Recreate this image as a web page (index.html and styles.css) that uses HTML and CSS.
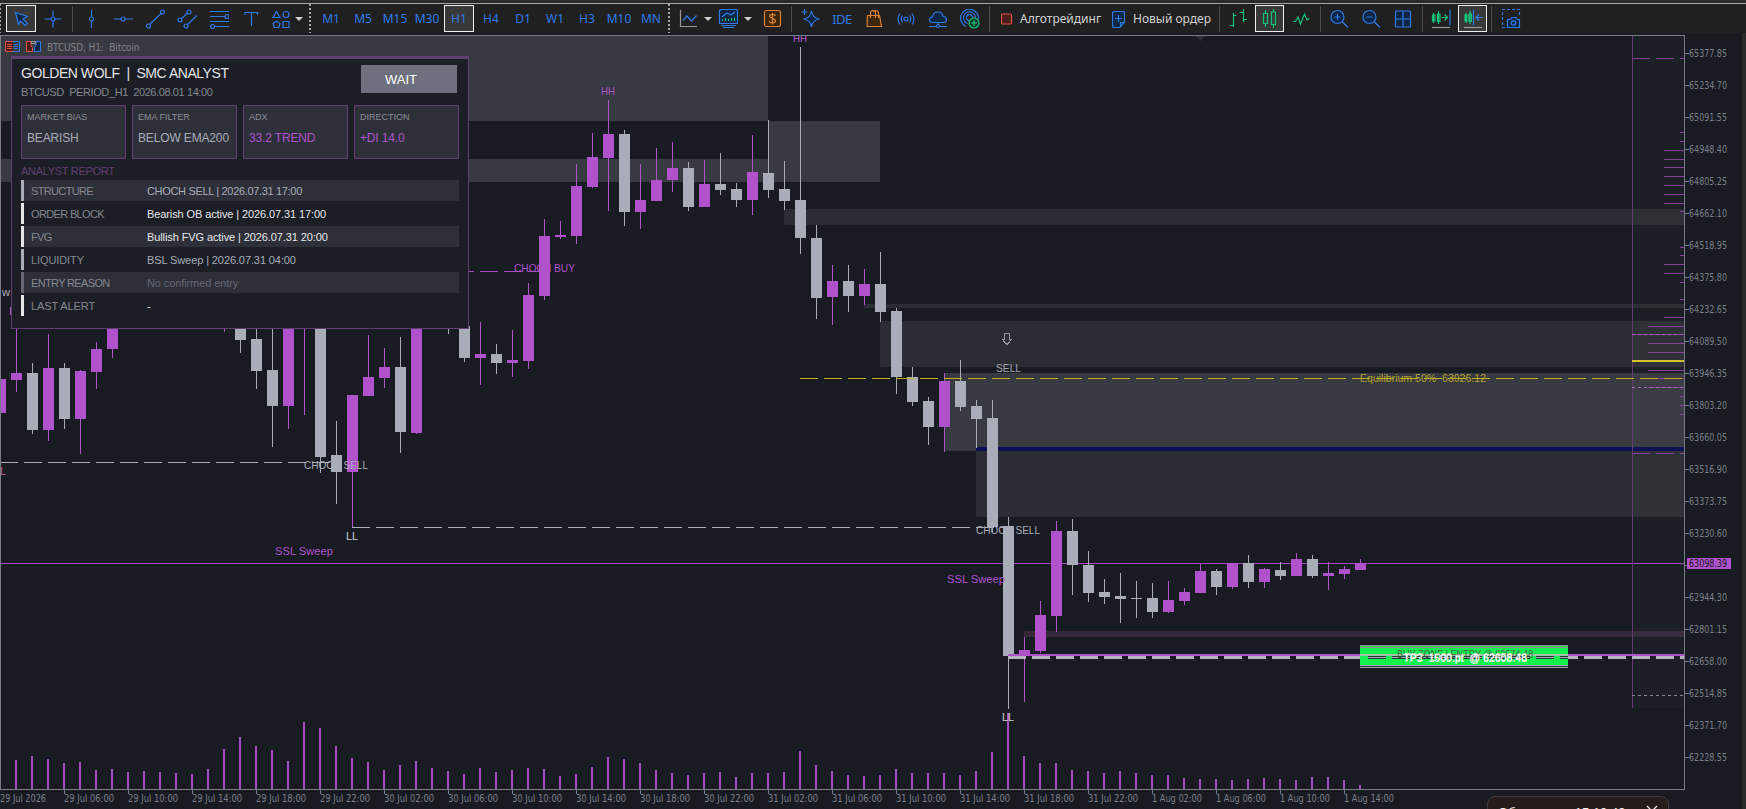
FILE: index.html
```
<!DOCTYPE html>
<html lang="ru">
<head>
  <meta charset="UTF-8">
  <meta name="viewport" content="width=device-width, initial-scale=1.0">
  <title>BTCUSD, H1</title>
  <link rel="stylesheet" href="styles.css">
</head>
<body>
  <header class="toolbar">
    <span class="grip first"></span>
    <button class="tool active"><svg width="20" height="20"><path class="fill" d="M4.500 3.500 L16.500 7.500 L12 10 L16.500 14.500 L14 16.500 L9.500 12 L7.500 15.500 Z"/></svg></button>
    <button class="tool"><svg width="20" height="20"><path d="M10 1.500V7.500M10 12.500V18.500M1.500 10H7.500M12.500 10H18.500"/><circle cx="10" cy="10" r="2"/></svg></button>
    <span class="sep"></span>
    <button class="tool"><svg width="20" height="20"><path d="M10.500 1V8M10.500 12V19"/><circle cx="10.500" cy="10" r="2"/></svg></button>
    <button class="tool"><svg width="20" height="20"><path d="M1 10H8M12 10H20"/><circle cx="10" cy="10" r="2"/></svg></button>
    <button class="tool"><svg width="20" height="20"><path d="M4.500 15.500L16 4.500"/><circle cx="3.500" cy="17" r="2"/><circle cx="17.500" cy="3" r="2"/></svg></button>
    <button class="tool"><svg width="20" height="20"><path d="M4.500 9.500L10.500 4M10.500 15.500L20 6.500"/><circle cx="3" cy="11" r="2"/><circle cx="12" cy="3" r="2"/><circle cx="9" cy="17" r="2"/></svg></button>
    <button class="tool"><svg width="20" height="20"><path d="M1 2.500H20M1 7.500H16M5 17.500H20M1 12.500H20"/><circle cx="18" cy="7.500" r="2"/><circle cx="3.500" cy="17.500" r="2"/></svg></button>
    <button class="tool"><svg width="20" height="20"><path d="M4 6V3.500H16.500V6M10.500 3.500V17"/></svg></button>
    <button class="tool shapes"><svg width="20" height="20"><path d="M5.500 2.500L9 8.500H2Z"/><circle cx="15" cy="5.500" r="3"/><path d="M5.500 12.200L9 14.500L7.700 18.500H3.300L2 14.500Z"/><path d="M12 12.500H18V18.500H12Z"/></svg></button>
    <span class="caret"></span>
    <span class="grip"></span>
    <button class="tool">M1</button>
    <button class="tool">M5</button>
    <button class="tool">M15</button>
    <button class="tool">M30</button>
    <button class="tool active">H1</button>
    <button class="tool">H4</button>
    <button class="tool">D1</button>
    <button class="tool">W1</button>
    <button class="tool">H3</button>
    <button class="tool">M10</button>
    <button class="tool">MN</button>
    <span class="grip last"></span>
    <button class="tool"><svg width="20" height="20"><path class="gray" d="M2.500 1V17.500H19"/><path d="M5 11.500L9 7L13.500 12L18.500 6.500"/></svg></button>
    <span class="caret"></span>
    <button class="tool"><svg width="20" height="20"><path class="fill" d="M1.500 14.500V2.500Q1.500 0.500 3.500 0.500H17.500Q19.500 0.500 19.500 2.500V14.500Z"/><path d="M3 16.500H18M5 18.500H16M4 8L9 4L13 6L17 3"/><path class="green" d="M4.500 12V10.500M7.500 12V9M10.500 12V10M13.500 12V9M16.500 12V8.500"/></svg></button>
    <span class="caret"></span>
    <button class="tool dollar"><svg width="20" height="20"><rect class="orange" x="2.500" y="1.500" width="16" height="16" rx="2"/><path class="orange-line" d="M13.500 7C13 5 7.500 4.500 7.500 7C7.500 9.800 13.500 9 13.500 12C13.500 14.500 8 14.500 7 12M10.500 4V15.500"/></svg></button>
    <span class="sep"></span>
    <button class="tool"><svg width="20" height="20"><path class="fill" d="M11.500 2Q12.500 9 19.500 10Q12.500 11 11.500 18Q10.500 11 3.500 10Q10.500 9 11.500 2Z"/><path d="M4.500 0V6M1.500 3H7.500"/></svg></button>
    <button class="tool ide">IDE</button>
    <button class="tool"><svg width="20" height="20"><path class="orange" d="M3.500 6.500H15.500L17.500 17.500H3Z"/><path class="orange-line" d="M6.500 9V4Q6.500 1.500 9 1.500Q11.500 1.500 11.500 4V9M9 3Q10 1.500 12 1.500Q14.500 2 14.500 4V9"/></svg></button>
    <button class="tool"><svg width="20" height="20"><circle cx="10" cy="10" r="2"/><path d="M6.500 6.500Q4 10 6.500 13.500M4 4.500Q0 10 4 15.500M13.500 6.500Q16 10 13.500 13.500M16 4.500Q20 10 16 15.500"/></svg></button>
    <button class="tool"><svg width="20" height="20"><path class="fill" d="M5 13.500Q1.500 13.500 1.500 10.500Q2 8 4.500 8Q5 3 10 3Q14.500 3 15 7.500Q18.500 7.500 18.500 11Q18.500 13.500 15.500 13.500Z"/><path d="M1 17.500H8M12 17.500H19M10 13.500V16"/><circle cx="10" cy="17" r="1.500"/></svg></button>
    <button class="tool"><svg width="20" height="20"><path d="M6 17.500A9 9 0 1 1 18.500 10M7.500 14.500A6 6 0 1 1 15.500 9M9 11.500A3 3 0 1 1 12.500 9"/><circle class="green-fill" cx="14" cy="14" r="5"/><path class="green" d="M14 11V17M11 14H17"/></svg></button>
    <span class="sep"></span>
    <button class="wide algo"><svg width="12" height="12"><rect class="red" x="0.500" y="1" width="10" height="10" rx="1"/></svg>Алготрейдинг</button>
    <button class="wide order"><svg width="14" height="18"><path class="fill" d="M2.500 1.500H11.500Q12.500 1.500 12.500 3V12L8 17.500H2.500Q0.500 17.500 0.500 16V3Q0.500 1.500 2.500 1.500Z"/><path d="M12.500 12.500H8.500V17M6.500 5V12M3 8.500H10"/></svg>Новый ордер</button>
    <span class="sep"></span>
    <button class="tool"><svg width="20" height="20"><path class="green" d="M5.500 4V18M1.500 16.500H5.500M5.500 6.500H8.500M15.500 0V13M11.500 3.500H15.500M15.500 10.500H19"/></svg></button>
    <button class="tool active slim"><svg width="20" height="20"><path class="green" d="M5.500 1V4M5.500 15V18M13.500 0V3M13.500 16V19"/><path class="green" d="M3.500 4.500H7.500V14.500H3.500ZM11.500 3H15.500V15.500H11.500Z"/></svg></button>
    <button class="tool"><svg width="20" height="20"><path class="green" d="M2 12.500H4.500L7 8L9.500 15L13.500 5L16 11L18.500 9.500"/></svg></button>
    <span class="sep"></span>
    <button class="tool"><svg width="20" height="20"><circle class="fill" cx="8.500" cy="8" r="6.500"/><path d="M13.500 13L19 18.500M5.500 8H11.500M8.500 5V11"/></svg></button>
    <button class="tool"><svg width="20" height="20"><circle class="fill" cx="8.500" cy="8" r="6.500"/><path d="M13.500 13L19 18.500M5.500 8H11.500"/></svg></button>
    <button class="tool"><svg width="20" height="20"><rect class="fill" x="2.500" y="2" width="15" height="16" rx="1"/><path d="M10 2V18M2.500 10H17.500"/></svg></button>
    <span class="sep"></span>
    <button class="tool"><svg width="20" height="20"><path class="green" d="M2.500 4V14M7.500 2V15M1.500 6H4V12H1.500ZM6.500 5H9V12.500H6.500ZM10.500 8.500H16M13.500 5.500L16.500 8.500L13.500 11.500"/><path d="M19 1V16"/><path class="gray" d="M1 18.500H19"/></svg></button>
    <button class="tool active slim"><svg width="20" height="20"><path class="green" d="M3 4V14M7 2V15M2 6H4V12H2ZM6 5H8.500V12.500H6Z"/><path d="M10.500 1V16M13 8.500H20M16 5.500L13 8.500L16 11.500"/><path class="gray" d="M1 18.500H19"/></svg></button>
    <span class="sep wider"></span>
    <button class="tool"><svg width="20" height="20"><path class="dash" d="M4 18.500H1.500V0.500H18.500V7"/><path class="fill" d="M7.500 10.500H9.500L11 8.500H15L16.500 10.500H18.500V18.500H6.500V10.500Z"/><circle cx="12.500" cy="14" r="2.200"/></svg></button>
  </header>

  <main class="workspace">
    <svg class="chart" id="chart" viewBox="0 33 1746 776" width="1746" height="776"></svg>

    <div class="chart-title">
      <svg width="16" height="12"><path class="red" d="M8 0.500H0.500V10.500H8M2 3.500H7M2 5.500H7M2 7.500H7"/><path d="M8 0.500H14.500V10.500H8M8.500 3.500H13M8.500 5.500H13M8.500 7.500H13"/></svg>
      <svg width="16" height="12"><path class="red" d="M5 0.500H0.500V10.500H6.500V6.500L5 5Z"/><path class="fill" d="M10 0.500H14.500V10.500H8.500V6.500L10 5Z"/><path class="gray" d="M5.500 0.500H9.500V2.500H5.500Z"/></svg>
      <span>BTCUSD, H1:&nbsp; Bitcoin</span>
    </div>

    <section class="panel">
      <div class="panel-head">
        <div>
          <h1>GOLDEN WOLF&nbsp; |&nbsp; SMC ANALYST</h1>
          <p class="sub">BTCUSD&nbsp; PERIOD_H1&nbsp; 2026.08.01 14:00</p>
        </div>
        <div class="signal">WAIT</div>
      </div>
      <div class="cards">
        <div class="card"><h2>MARKET BIAS</h2><p>BEARISH</p></div>
        <div class="card"><h2>EMA FILTER</h2><p>BELOW EMA200</p></div>
        <div class="card"><h2>ADX</h2><p class="up">33.2 TREND</p></div>
        <div class="card"><h2>DIRECTION</h2><p class="up">+DI 14.0</p></div>
      </div>
      <h3>ANALYST REPORT</h3>
      <ul class="report">
        <li class="tight"><b>STRUCTURE</b><span>CHOCH SELL | 2026.07.31 17:00</span></li>
        <li class="on"><b>ORDER BLOCK</b><span>Bearish OB active | 2026.07.31 17:00</span></li>
        <li class="on"><b>FVG</b><span>Bullish FVG active | 2026.07.31 20:00</span></li>
        <li><b class="loose">LIQUIDITY</b><span>BSL Sweep | 2026.07.31 04:00</span></li>
        <li class="off"><b>ENTRY REASON</b><span>No confirmed entry</span></li>
        <li class="on"><b class="loose">LAST ALERT</b><span>-</span></li>
      </ul>
    </section>

    <div class="toast">
      <span>Обновлено</span>
      <span class="time">15:10:49</span>
      <svg width="12" height="12"><path d="M1 1L11 11M11 1L1 11"/></svg>
    </div>
  </main>
  <script src="script.js"></script>
</body>
</html>
```
FILE: styles.css
```
* {
  padding: 0;
  margin: 0;
  box-sizing: border-box;
}
body {
  width: 1746px;
  height: 809px;
  overflow: hidden;
  background-color: #181b22;
  font-family: "Liberation Sans", Arial, sans-serif;
}
svg {
  display: block;
  fill: none;
  stroke: #2f7be6;
  stroke-width: 1.2;
}
.fill { fill: #0c2545; }
.gray { stroke: #9a9a9a; }
.green { stroke: #12c47a; }
.green-fill { stroke: #12c47a; fill: #0f3d2b; }
.orange { stroke: #d98236; fill: #3d2508; }
.orange-line { stroke: #d98236; }
.red { stroke: #e05248; fill: #4a1d19; }
.dash { stroke-dasharray: 3 2; }

/* toolbar */
.toolbar {
  display: flex;
  align-items: center;
  height: 33px;
  padding-top: 4px;
  background: linear-gradient(#2a2a2a 0 3px, #a6a6a6 3px 4px, #202020 4px);
}
.toolbar > * {
  flex: none;
}
.tool, .wide {
  border: 1px solid transparent;
  background: none;
  color: #2f7be6;
  font-family: "Noto Sans", sans-serif;
  font-size: 12px;
  white-space: nowrap;
}
.tool {
  display: flex;
  align-items: center;
  justify-content: center;
  width: 30px;
  height: 27px;
  margin: 0 1px;
}
.tool.active {
  border-color: #efefef;
  background-color: #383838;
}
.tool.slim {
  width: 29px;
}
.tool.shapes {
  width: 28px;
  margin: 0;
}
.tool.dollar {
  margin-left: 5px;
}
.tool.ide {
  font-size: 13px;
  letter-spacing: -0.5px;
}
.wide {
  display: flex;
  align-items: center;
  gap: 7px;
  color: #d0d0d0;
  font-size: 12px;
}
.algo {
  width: 111px;
  padding-left: 8px;
}
.order {
  width: 113px;
  padding-left: 8px;
}
.sep {
  width: 1px;
  height: 26px;
  margin: 0 2px 0 3px;
  background-color: #4c4c4c;
}
.sep.wider {
  margin-right: 3px;
}
.caret {
  width: 8px;
  height: 4px;
  border: 4px solid transparent;
  border-top-color: #d0d0d0;
  border-bottom: 0;
}
.grip {
  width: 2px;
  height: 29px;
  margin: 0 4px 0 6px;
  background: repeating-linear-gradient(#a8a8a8 0 2px, transparent 2px 4px);
}
.grip.first {
  width: 1px;
  margin: 0 4px 0 0;
}
.grip.last {
  margin: 0 2px 0 1px;
}

/* chart */
.workspace {
  position: relative;
  height: 776px;
  overflow: hidden;
}
.chart {
  stroke: none;
  shape-rendering: crispEdges;
}
.chart text {
  font-family: "Liberation Sans", Arial, sans-serif;
  font-size: 11px;
}
.chart .axis text {
  font-family: "DejaVu Sans Condensed", "DejaVu Sans", sans-serif;
  font-size: 10px;
  fill: #7b7f89;
}
.chart .axis .current {
  fill: #181b22;
}
.chart-title {
  position: absolute;
  top: 8px;
  left: 5px;
  display: flex;
  align-items: center;
  gap: 5px;
  color: #7f828a;
  font: 10px "DejaVu Sans Condensed", "DejaVu Sans", sans-serif;
  letter-spacing: -0.1px;
}
.chart-title svg {
  stroke-width: 1;
}

/* analyst panel */
.panel {
  position: absolute;
  top: 23px;
  left: 11px;
  width: 458px;
  height: 273px;
  padding: 6px 9px;
  border: 1px solid #613f70;
  border-top-width: 3px;
  background-color: #1c1e26;
}
.panel h1, .panel h2, .panel h3, .panel b {
  font-weight: 400;
}
.panel-head {
  display: flex;
  justify-content: space-between;
  height: 40px;
  padding-right: 2px;
}
h1 {
  color: #e1e2e6;
  font-size: 14px;
  line-height: 17px;
  letter-spacing: -0.45px;
}
.sub {
  margin-top: 4px;
  color: #85878f;
  font-size: 11px;
  line-height: 13px;
  letter-spacing: -0.4px;
}
.signal {
  width: 96px;
  height: 28px;
  padding-right: 16px;
  background-color: #6e717d;
  color: #fff;
  font-size: 13px;
  line-height: 29px;
  text-align: center;
}
.cards {
  display: grid;
  grid-template-columns: repeat(4, 105px);
  gap: 6px;
}
.card {
  height: 54px;
  padding: 6px 5px;
  border: 1px solid #613f70;
  background-color: #2e3039;
}
.card h2 {
  color: #8b8d95;
  font-size: 9px;
  line-height: 10px;
}
.card p {
  margin-top: 9px;
  color: #a9adb8;
  font-size: 12px;
  line-height: 15px;
  letter-spacing: -0.15px;
  white-space: nowrap;
}
.card .up {
  color: #b052cc;
}
.panel h3 {
  margin-top: 5px;
  color: #613f70;
  font-size: 11px;
  line-height: 14px;
  letter-spacing: -0.3px;
}
.report {
  display: grid;
  gap: 2px;
  margin-top: 2px;
  list-style: none;
  font-size: 11px;
  line-height: 23px;
  letter-spacing: -0.1px;
}
.report li {
  display: grid;
  grid-template-columns: 116px 1fr;
  height: 21px;
  padding-left: 7px;
  border-left: 3px solid #a9adb8;
  color: #a9adb8;
}
.report li:nth-child(odd) {
  background-color: #2e3039;
}
.report b {
  color: #85878f;
  letter-spacing: -0.65px;
}
.report .loose {
  letter-spacing: -0.1px;
}
.report .tight {
  letter-spacing: -0.33px;
}
.report .on {
  border-color: #e6e7eb;
  color: #e6e7eb;
}
.report .off {
  border-color: #646773;
  color: #646773;
}

.toast {
  position: absolute;
  top: 763px;
  left: 1487px;
  display: flex;
  width: 182px;
  height: 60px;
  padding: 8px 10px;
  border: 1px solid #3c3c3e;
  border-radius: 8px;
  background-color: #261c1a;
  color: #f0f0f0;
  font-size: 13px;
  line-height: 15px;
}
.toast .time {
  margin-left: 9px;
}
.toast svg {
  margin-left: auto;
  stroke: #f0f0f0;
}
```
FILE: script.js
```
const UP = '#b052cc'
const DOWN = '#a9adb8'
const STEP = 16
const RIGHT = 1684
const BOTTOM = 789

// bar index, direction, body top, body bottom, high, low
const candles = [
  [0, 1, 379, 413, 379, 413], [1, 1, 373, 380, 300, 392], [2, 0, 373, 430, 363, 434],
  [3, 1, 368, 430, 334, 441], [4, 0, 368, 419, 363, 429], [5, 1, 371, 419, 370, 454],
  [6, 1, 349, 372, 342, 389], [7, 1, 310, 349, 300, 358], [14, 1, 300, 320, 300, 332],
  [15, 0, 310, 340, 300, 353], [16, 0, 339, 371, 300, 389], [17, 0, 370, 406, 300, 447],
  [18, 1, 310, 406, 300, 429], [19, 1, 300, 315, 300, 415], [20, 0, 310, 457, 300, 473],
  [21, 0, 455, 472, 421, 504], [22, 1, 395, 472, 395, 527], [23, 1, 377, 396, 335, 396],
  [24, 1, 367, 378, 348, 388], [25, 0, 367, 432, 337, 453], [26, 1, 310, 433, 300, 434],
  [28, 0, 300, 320, 300, 334], [29, 0, 326, 358, 326, 362], [30, 1, 354, 358, 322, 385],
  [31, 0, 354, 363, 344, 374], [32, 1, 360, 363, 330, 377], [33, 1, 295, 361, 283, 369],
  [34, 1, 236, 296, 219, 300], [35, 1, 235, 237, 221, 239], [36, 1, 186, 236, 164, 244],
  [37, 1, 157, 187, 133, 188], [38, 1, 134, 158, 100, 211], [39, 0, 134, 212, 130, 226],
  [40, 1, 200, 212, 164, 229], [41, 1, 180, 201, 148, 201], [42, 1, 168, 180, 142, 192],
  [43, 0, 168, 207, 162, 211], [44, 1, 184, 207, 160, 207], [45, 0, 184, 190, 153, 195],
  [46, 0, 189, 200, 183, 207], [47, 1, 172, 200, 135, 215], [48, 0, 173, 190, 120, 198],
  [49, 0, 189, 201, 161, 210], [50, 0, 200, 238, 47, 254], [51, 0, 238, 298, 225, 319],
  [52, 1, 281, 297, 265, 325], [53, 0, 281, 296, 265, 312], [54, 1, 284, 296, 269, 305],
  [55, 0, 284, 312, 252, 322], [56, 0, 311, 377, 308, 394], [57, 0, 377, 402, 367, 406],
  [58, 0, 401, 427, 397, 445], [59, 1, 381, 427, 373, 452], [60, 0, 381, 407, 360, 411],
  [61, 0, 406, 419, 400, 448], [62, 0, 418, 527, 400, 532], [63, 0, 526, 656, 517, 709],
  [64, 1, 650, 656, 637, 702], [65, 1, 615, 651, 601, 653], [66, 1, 531, 616, 521, 632],
  [67, 0, 531, 565, 519, 595], [68, 0, 565, 593, 551, 602], [69, 0, 592, 597, 579, 604],
  [70, 0, 596, 599, 573, 623], [71, 0, 598, 599, 581, 618], [72, 0, 598, 612, 583, 618],
  [73, 1, 600, 612, 581, 613], [74, 1, 592, 601, 588, 605], [75, 1, 571, 593, 564, 593],
  [76, 0, 571, 587, 569, 595], [77, 1, 563, 587, 563, 589], [78, 0, 563, 582, 555, 588],
  [79, 1, 569, 582, 568, 588], [80, 0, 570, 576, 562, 580], [81, 1, 559, 576, 553, 576],
  [82, 0, 559, 576, 555, 578], [83, 1, 573, 576, 562, 590], [84, 1, 569, 574, 566, 579],
  [85, 1, 563, 570, 559, 570]
]

const volumes = [29, 33, 30, 26, 27, 19, 20, 17, 18, 17, 16, 15, 20, 40, 52, 43, 39, 28, 67, 61,
  43, 31, 27, 19, 24, 28, 21, 18, 15, 21, 17, 19, 21, 20, 13, 15, 22, 32, 30, 26, 19, 16, 14,
  16, 17, 12, 16, 16, 17, 38, 24, 18, 14, 13, 14, 20, 16, 16, 16, 14, 18, 37, 76, 33, 26, 26,
  19, 18, 16, 18, 16, 14, 14, 11, 10, 10, 9, 10, 11, 10, 9, 12, 12, 9, 4]

// x1, y1, x2, y2, colour
const zones = [
  [1, 36, 768, 121, '#383a41'], [1, 159, 768, 182, '#383a41'], [768, 121, 880, 182, '#383a41'],
  [784, 209, RIGHT, 225, '#2a2d34'], [864, 304, RIGHT, 308, '#2a2d34'],
  [880, 321, RIGHT, 367, '#2b2d34'], [944, 373, RIGHT, 451, '#383a41'],
  [976, 451, RIGHT, 517, '#2b2d34'], [976, 447, RIGHT, 451, '#0a0e56'],
  [1024, 631, RIGHT, 637, '#35293a']
]

// y, left edge
const profile = [[132, 1680], [141, 1680], [150, 1664], [159, 1664], [167, 1664], [176, 1664],
  [185, 1664], [194, 1664], [203, 1664], [211, 1680], [247, 1680], [255, 1680], [264, 1664],
  [273, 1664], [282, 1680], [299, 1680], [317, 1664], [326, 1648], [334, 1632], [343, 1648],
  [352, 1648], [370, 1648], [378, 1648], [387, 1648], [396, 1680], [405, 1680], [414, 1680]]

const prices = ['65377.85', '65234.70', '65091.55', '64948.40', '64805.25', '64662.10', '64518.95',
  '64375.80', '64232.65', '64089.50', '63946.35', '63803.20', '63660.05', '63516.90', '63373.75',
  '63230.60', '', '62944.30', '62801.15', '62658.00', '62514.85', '62371.70', '62228.55']

const times = ['29 Jul 2026', '29 Jul 06:00', '29 Jul 10:00', '29 Jul 14:00', '29 Jul 18:00',
  '29 Jul 22:00', '30 Jul 02:00', '30 Jul 06:00', '30 Jul 10:00', '30 Jul 14:00', '30 Jul 18:00',
  '30 Jul 22:00', '31 Jul 02:00', '31 Jul 06:00', '31 Jul 10:00', '31 Jul 14:00', '31 Jul 18:00',
  '31 Jul 22:00', '1 Aug 02:00', '1 Aug 06:00', '1 Aug 10:00', '1 Aug 14:00']

const rect = (x, y, w, h, fill) => `<rect x="${x}" y="${y}" width="${w}" height="${h}" fill="${fill}"/>`
const dashed = (x1, x2, y, h, stroke, dash = '18 6') =>
  `<path d="M${x1} ${y + h / 2}H${x2}" stroke="${stroke}" stroke-width="${h}" stroke-dasharray="${dash}"/>`
const label = (x, y, w, text, fill, cls = '') =>
  `<text x="${x}" y="${y}" textLength="${w}" lengthAdjust="spacingAndGlyphs" fill="${fill}" class="${cls}">${text}</text>`

let out = '<clipPath id="area"><rect x="1" y="36" width="1683" height="753"/></clipPath><g clip-path="url(#area)">'
zones.forEach(([x1, y1, x2, y2, c]) => { out += rect(x1, y1, x2 - x1, y2 - y1, c) })
out += rect(1633, 36, 51, 672, 'rgba(120,150,130,.04)')
out += '<path d="M1196 36H1205L1200.500 41Z" fill="#2c2e36"/>'
volumes.forEach((h, i) => { out += rect((i + 1) * STEP - 1, BOTTOM - h, 2, h, '#a54cc0') })
out += rect(1, 563, 1683, 1, '#a24bbd')

candles.forEach(([i, up, top, bottom, high, low]) => {
  const c = up ? UP : DOWN
  out += rect(i * STEP, high, 1, low - high, c) + rect(i * STEP - 5, top, 11, bottom - top, c)
})

profile.forEach(([y, x]) => { out += rect(x, y, RIGHT - x, 1, '#8a4199') })
out += rect(1632, 36, 1, 672, '#643c70')
out += dashed(1632, RIGHT, 58, 1, '#8a4199') + dashed(1632, RIGHT, 453, 1, '#8a4199')
out += dashed(1632, RIGHT, 334, 1, '#b45fcd', '3 3') + dashed(1632, RIGHT, 387, 1, '#a46ab5', '3 3')
out += dashed(1632, RIGHT, 695, 1, '#85878f', '3 3')
out += rect(1632, 360, 52, 2, '#d3c02a')

out += dashed(0, 331, 462, 1, DOWN) + dashed(352, 1008, 527, 1, DOWN)
out += dashed(456, 540, 271, 1, '#a24bbd') + dashed(800, RIGHT, 378, 1, '#c4ae1f')
out += rect(1008, 654, 676, 2, UP) + dashed(1008, RIGHT, 656, 3, '#b5b7c0')

// take profit tags stacked on each other
out += rect(1360, 645, 208, 21, '#14f04e') + rect(1360, 645, 208, 1, '#93869c') + rect(1360, 647, 208, 1, '#93869c')
out += rect(1360, 654, 208, 2, '#9fc4a8') + dashed(1368, 1568, 656, 1, '#1c3a2a') + dashed(1368, 1568, 657, 1, DOWN)
out += dashed(1368, 1568, 658, 1, '#1c3a2a')
out += rect(1360, 665, 208, 1, DOWN) + rect(1360, 666, 208, 1, '#1c3a2a') + rect(1360, 667, 208, 1, DOWN)
out += label(1397, 658, 136, 'BUY ZONE | ENTRY @ 62674.48', '#3a6a4a')
out += label(1404, 661, 123, 'TP2&#160; 1000.pt&#160; @ 62658.48', '#dfe5e0')
out += label(1403, 662, 124, 'TP3&#160; 1500.pt&#160; @ 62608.48', '#ffffff')

out += label(601, 95, 14, 'HH', UP) + label(793, 42, 14, 'HH', UP)
out += label(346, 540, 12, 'LL', '#d0d2d8') + label(1002, 721, 12, 'LL', '#d0d2d8')
out += label(514, 272, 61, 'CHOCH BUY', UP)
out += label(304, 469, 64, 'CHOCH SELL', DOWN) + label(976, 534, 64, 'CHOCH SELL', DOWN)
out += label(275, 555, 58, 'SSL Sweep', UP) + label(947, 583, 58, 'SSL Sweep', UP)
out += label(996, 372, 25, 'SELL', DOWN) + label(1360, 382, 126, 'Equilibrium 50%&#160; 63926.12', '#b5a32a')
out += label(2, 296, 8, 'w', DOWN) + label(0, 475, 6, 'L', '#c05a9c') + rect(10, 307, 1, 8, UP)
out += '<path d="M1004.500 333.500H1009.500V339.500H1011.500L1007 344.500L1002.500 339.500H1004.500Z" stroke="#8f939e"/>'
out += '</g>'

out += '<g class="axis">'
out += rect(0, 35, 1685, 1, '#787c86') + rect(0, 35, 1, 755, '#787c86')
out += rect(RIGHT, 35, 1, 755, '#787c86') + rect(0, BOTTOM, 1685, 1, '#787c86')
prices.forEach((p, i) => {
  const y = 53 + i * 32
  out += rect(1685, y, 4, 1, '#787c86')
  if (p) out += label(1689, y + 4, 38, p, '')
})
out += rect(1687, 558, 44, 11, UP) + label(1689, 567, 38, '63098.39', '', 'current')
times.forEach((t, i) => {
  if (i) out += rect(i * 64, 790, 1, 4, '#787c86')
  out += label(i * 64, 802, i ? 50 : 46, t, '')
})
out += rect(1742, 33, 4, 776, '#2b2b2b') + '</g>'

document.querySelector('#chart').innerHTML = out
```
